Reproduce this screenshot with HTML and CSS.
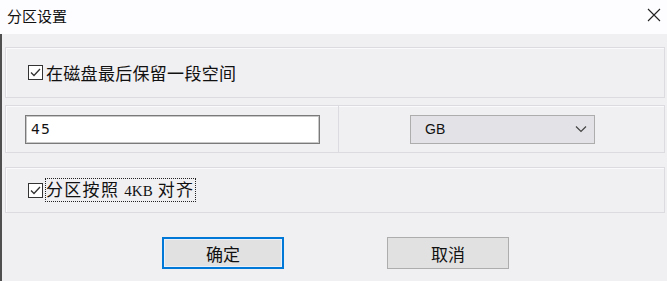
FILE: index.html
```html
<!DOCTYPE html>
<html lang="zh-CN">
<head>
<meta charset="utf-8">
<title>分区设置</title>
<link rel="stylesheet" href="styles.css">
</head>
<body>
<div class="window">
  <div class="titlebar">
    <span class="title">分区设置</span>
    <span class="close">
      <svg width="14" height="14" viewBox="0 0 14 14"><path d="M1 1 L13 13 M13 1 L1 13" stroke="#222" stroke-width="1.1" fill="none"/></svg>
    </span>
  </div>
  <div class="content">
    <div class="panel row1">
      <label class="check">
        <span class="box"><svg width="15" height="15" viewBox="0 0 15 15"><rect x="0.5" y="0.5" width="14" height="14" fill="#fff" stroke="#333"/><path d="M3 7.5 L6 10.5 L12 4" stroke="#333" stroke-width="1.3" fill="none"/></svg></span>
        <span class="label">在磁盘最后保留一段空间</span>
      </label>
    </div>
    <div class="panel row2">
      <div class="cell left">
        <div class="input">45</div>
      </div>
      <div class="cell right">
        <div class="select">
          <span>GB</span>
          <svg width="12" height="8" viewBox="0 0 12 8"><path d="M1 1.5 L6 6.5 L11 1.5" stroke="#444" stroke-width="1.2" fill="none"/></svg>
        </div>
      </div>
    </div>
    <div class="panel row3">
      <label class="check">
        <span class="box"><svg width="15" height="15" viewBox="0 0 15 15"><rect x="0.5" y="0.5" width="14" height="14" fill="#fff" stroke="#333"/><path d="M3 7.5 L6 10.5 L12 4" stroke="#333" stroke-width="1.3" fill="none"/></svg></span>
        <span class="label focus">分区按照 <span class="latin">4KB</span> 对齐</span>
      </label>
    </div>
    <div class="buttons">
      <button class="btn default">确定</button>
      <button class="btn">取消</button>
    </div>
  </div>
</div>
</body>
</html>
```
FILE: styles.css
```css
html, body {
  margin: 0;
  padding: 0;
}
body {
  width: 667px;
  height: 281px;
  overflow: hidden;
  font-family: "Noto Sans CJK SC", "Noto Sans", sans-serif;
  color: #111;
}
.window {
  display: flex;
  flex-direction: column;
  height: 281px;
}
.titlebar {
  height: 34px;
  background: #fdfcfe;
  display: flex;
  align-items: center;
  justify-content: space-between;
  padding: 0 6px 4px 7px;
  box-sizing: border-box;
}
.title {
  font-size: 15px;
  line-height: 1;
}
.close {
  display: flex;
  width: 14px;
  height: 14px;
}
.content {
  flex: 1;
  background: #f0eff2;
  border-left: 2px solid #4f4f4f;
  padding: 13px 2px 0 3px;
  display: flex;
  flex-direction: column;
}
.panel {
  border: 1px solid #dcdbe0;
  box-shadow: inset 1px 1px 0 #fafafc;
  box-sizing: border-box;
}
.row1 {
  height: 51px;
  display: flex;
  align-items: center;
  padding-left: 22px;
}
.row2 {
  margin-top: 7px;
  height: 48px;
  display: flex;
}
.row3 {
  margin-top: 14px;
  height: 46px;
  display: flex;
  align-items: center;
  padding-left: 22px;
}
.check {
  display: flex;
  align-items: center;
  gap: 3px;
}
.box {
  display: flex;
  width: 15px;
  height: 15px;
}
.label {
  font-size: 17px;
  line-height: 20px;
  letter-spacing: 0.3px;
}
.focus {
  outline: 1px dotted #222;
  outline-offset: 0;
  letter-spacing: 1.3px;
  padding-right: 1px;
}
.latin {
  font-family: "Liberation Serif", serif;
  font-size: 15px;
  letter-spacing: 0;
}
.cell {
  display: flex;
  align-items: center;
  box-sizing: border-box;
}
.cell.left {
  width: 333px;
  padding-left: 19px;
  border-right: 1px solid #dcdbe0;
}
.cell.right {
  flex: 1;
  padding-left: 71px;
}
.input {
  width: 295px;
  height: 29px;
  box-sizing: border-box;
  border: 1px solid #7a7a7a;
  box-shadow: inset 0 0 0 1px #c8c8c8;
  background: #fff;
  font-family: "DejaVu Sans", sans-serif;
  font-size: 14px;
  letter-spacing: 1px;
  padding-left: 5px;
  display: flex;
  align-items: center;
}
.select {
  width: 185px;
  height: 29px;
  box-sizing: border-box;
  border: 1px solid #adadad;
  background: #e3e2e6;
  display: flex;
  align-items: center;
  justify-content: space-between;
  padding: 0 7px 0 14px;
  font-family: "Liberation Sans", sans-serif;
  font-size: 14px;
}
.buttons {
  margin-top: 24px;
  display: flex;
  padding-left: 157px;
  gap: 103px;
}
.btn {
  width: 122px;
  height: 32px;
  box-sizing: border-box;
  border: 1px solid #adadad;
  background: #e1e1e1;
  font-family: "Noto Sans CJK SC", sans-serif;
  font-size: 17px;
  color: #111;
  padding: 0;
  margin: 0;
}
.btn.default {
  border: 2px solid #0078d7;
  box-shadow: inset 0 0 0 1px #e8f1fb;
}
```
